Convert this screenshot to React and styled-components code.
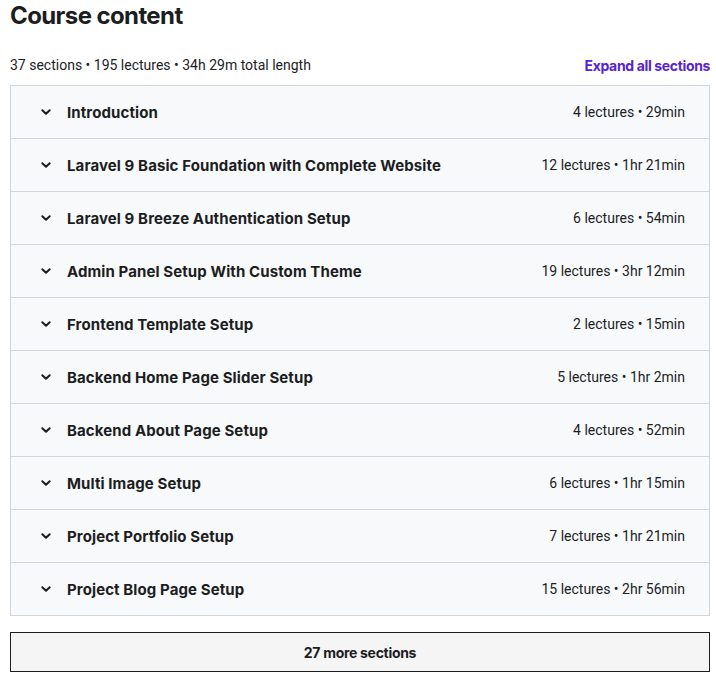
import React from 'react';
import styled, { createGlobalStyle } from 'styled-components';

const GlobalStyle = createGlobalStyle`
    body {
        margin: 0;
        background: #fff;
        font-family: Roboto, 'Noto Sans', sans-serif;
        color: #1c1d1f;
    }
`

const Page = styled.div`
    padding: 2px 6px 0 10px;
`

const Title = styled.h2`
    margin: 0;
    font-family: Inter, sans-serif;
    font-size: 24px;
    font-weight: 700;
    line-height: 28px;
    letter-spacing: -0.6px;
    color: #1c1d1f;
`

const Meta = styled.div`
    display: flex;
    justify-content: space-between;
    align-items: center;
    margin-top: 25px;
    height: 20px;
    margin-bottom: 10px;
    font-size: 14px;
`

const ExpandLink = styled.button`
    border: none;
    background: none;
    padding: 0;
    font-family: Inter, sans-serif;
    font-size: 14px;
    font-weight: 700;
    letter-spacing: -0.35px;
    color: #5624d0;
    cursor: pointer;
`

const List = styled.div`
    border: 1px solid #d1d7dc;
    border-bottom: none;
`

const Section = styled.div`
    display: flex;
    align-items: center;
    height: 52px;
    padding: 0 24px 0 28px;
    background: #f7f9fa;
    border-bottom: 1px solid #d1d7dc;
`

const Chevron = styled.svg`
    width: 14px;
    height: 14px;
    margin-right: 14px;
    flex-shrink: 0;
`

const SectionTitle = styled.span`
    flex: 1;
    font-family: Inter, sans-serif;
    font-size: 15px;
    font-weight: 700;
    letter-spacing: 0.1px;
    color: #1c1d1f;
`

const SectionInfo = styled.span`
    font-size: 14px;
    color: #1c1d1f;
`

const MoreButton = styled.button`
    display: block;
    width: 100%;
    height: 40px;
    margin-top: 16px;
    border: 1px solid #1c1d1f;
    background: #f5f5f5;
    font-family: Inter, sans-serif;
    font-size: 14px;
    font-weight: 700;
    letter-spacing: -0.3px;
    color: #1c1d1f;
    cursor: pointer;
`

const sections = [
    ['Introduction', '4 lectures • 29min'],
    ['Laravel 9 Basic Foundation with Complete Website', '12 lectures • 1hr 21min'],
    ['Laravel 9 Breeze Authentication Setup', '6 lectures • 54min'],
    ['Admin Panel Setup With Custom Theme', '19 lectures • 3hr 12min'],
    ['Frontend Template Setup', '2 lectures • 15min'],
    ['Backend Home Page Slider Setup', '5 lectures • 1hr 2min'],
    ['Backend About Page Setup', '4 lectures • 52min'],
    ['Multi Image Setup', '6 lectures • 1hr 15min'],
    ['Project Portfolio Setup', '7 lectures • 1hr 21min'],
    ['Project Blog Page Setup', '15 lectures • 2hr 56min'],
]

const App = () => (
    <>
        <GlobalStyle />
        <Page>
            <Title>Course content</Title>
            <Meta>
                <span>37 sections • 195 lectures • 34h 29m total length</span>
                <ExpandLink>Expand all sections</ExpandLink>
            </Meta>
            <List>
                {sections.map(([title, info]) => (
                    <Section key={title}>
                        <Chevron viewBox="0 0 14 14">
                            <path d="M3.3 5.2 L7 8.8 L10.7 5.2" fill="none" stroke="#1c1d1f" strokeWidth="2" strokeLinecap="round" strokeLinejoin="round" />
                        </Chevron>
                        <SectionTitle>{title}</SectionTitle>
                        <SectionInfo>{info}</SectionInfo>
                    </Section>
                ))}
            </List>
            <MoreButton>27 more sections</MoreButton>
        </Page>
    </>
)

export default App
